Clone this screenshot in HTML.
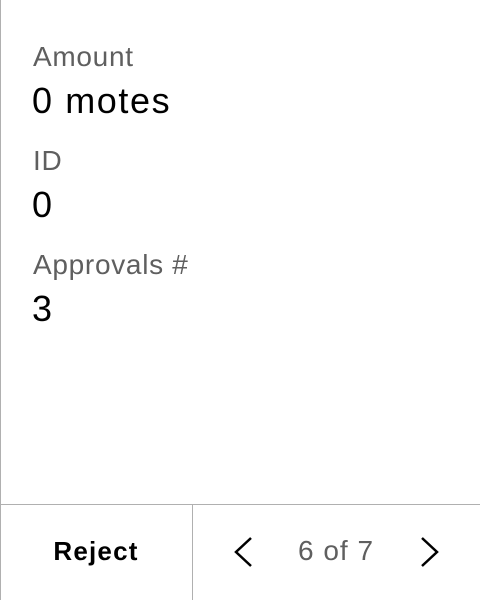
<!DOCTYPE html>
<html><head><style>
html,body{margin:0;padding:0;width:480px;height:600px;background:#fff;overflow:hidden;font-family:"Liberation Sans",sans-serif}
.l{position:absolute;left:0;top:0;width:1px;height:600px;background:#b0b0b0}
.t{position:absolute;white-space:nowrap;line-height:1}
.lab{font-size:28px;color:#5f5f5f;left:33px;letter-spacing:0.7px}
.val{font-size:36px;color:#000;left:32px;letter-spacing:1.6px}
</style></head><body>
<div class="l"></div>
<div class="t lab" style="top:43px">Amount</div>
<div class="t val" style="top:83px">0 motes</div>
<div class="t lab" style="top:147px">ID</div>
<div class="t val" style="top:187px">0</div>
<div class="t lab" style="top:251px">Approvals #</div>
<div class="t val" style="top:291px">3</div>
<div style="position:absolute;left:0;top:504px;width:480px;height:1px;background:#b0b0b0"></div>
<div style="position:absolute;left:192px;top:504px;width:1px;height:96px;background:#b0b0b0"></div>
<div class="t" style="left:0;width:192px;text-align:center;top:538px;font-size:26px;font-weight:bold;color:#000;letter-spacing:1.2px">Reject</div>
<div class="t" style="left:236px;width:200px;text-align:center;top:537px;font-size:28px;color:#5f5f5f;letter-spacing:1px">6 of 7</div>
<svg style="position:absolute;left:0;top:0" width="480" height="600">
<path d="M251 538 L236 552 L251 566" fill="none" stroke="#000" stroke-width="2.5"/>
<path d="M422 538 L437 552 L422 566" fill="none" stroke="#000" stroke-width="2.5"/>
</svg>
</body></html>
